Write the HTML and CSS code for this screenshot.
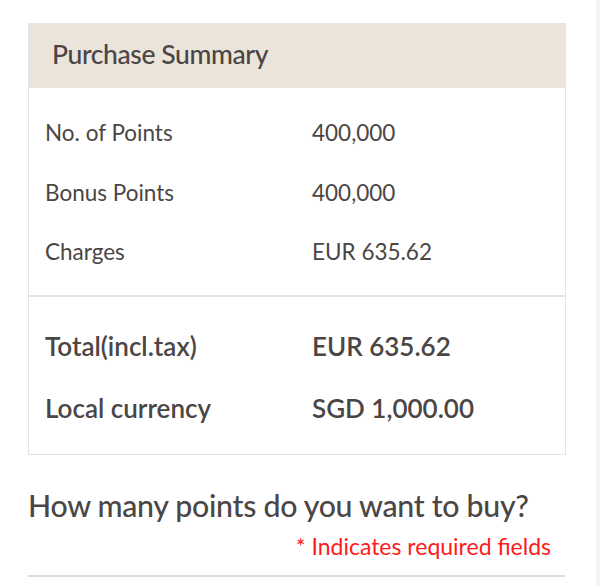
FILE: index.html
```html
<!DOCTYPE html>
<html>
<head>
<meta charset="utf-8">
<link rel="stylesheet" href="styles.css">
</head>
<body>
<div class="page">
  <main class="content">
    <section class="summary">
      <header class="summary-head">Purchase Summary</header>
      <div class="summary-rows">
        <div class="label">No. of Points</div><div class="value">400,000</div>
        <div class="label">Bonus Points</div><div class="value">400,000</div>
        <div class="label">Charges</div><div class="value">EUR 635.62</div>
      </div>
      <div class="summary-totals">
        <div class="label">Total(incl.tax)</div><div class="value">EUR 635.62</div>
        <div class="label">Local currency</div><div class="value">SGD 1,000.00</div>
      </div>
    </section>
    <h2 class="question">How many points do you want to buy?</h2>
    <p class="required">* Indicates required fields</p>
    <hr class="rule">
  </main>
  <div class="track"></div>
</div>
</body>
</html>
```

FILE: styles.css
```css
html, body {
  margin: 0;
  padding: 0;
  background: #fff;
}
body {
  font-family: Lato, "Open Sans", sans-serif;
  color: #4b4645;
}
.page {
  display: flex;
  height: 586px;
  overflow: hidden;
}
.content {
  flex: 1;
  padding: 23px 0 0 28px;
}
.track {
  width: 4px;
  background: #f3f3f3;
}
.summary {
  width: 536px;
  border: 1px solid #e3e3e8;
  border-top: none;
}
.summary-head {
  height: 61px;
  display: flex;
  align-items: center;
  padding-left: 23px;
  padding-bottom: 4px;
  background: #ebe4db;
  font-size: 26.5px;
  font-weight: 500;
  letter-spacing: -0.4px;
}
.summary-rows,
.summary-totals {
  display: grid;
  grid-template-columns: 267px 1fr;
  align-items: center;
  padding-left: 16px;
}
.summary-rows {
  grid-auto-rows: 59.5px;
  padding-top: 15px;
  padding-bottom: 13px;
  font-size: 22.5px;
  border-bottom: 2px solid #e3e3e8;
}
.summary-totals {
  grid-auto-rows: 62px;
  padding-top: 18px;
  padding-bottom: 15px;
  font-size: 26px;
  font-weight: 600;
  letter-spacing: 0;
}
.question {
  margin: 32px 0 0;
  font-size: 30.3px;
  font-weight: 500;
  line-height: 36px;
  letter-spacing: -0.3px;
}
.required {
  width: 523px;
  margin: 10px 0 0;
  text-align: right;
  font-size: 23px;
  line-height: 26px;
  color: #ff1a1a;
}
.rule {
  width: 537px;
  margin: 16px 0 0;
  border: none;
  border-top: 2px solid #dedede;
}
```
